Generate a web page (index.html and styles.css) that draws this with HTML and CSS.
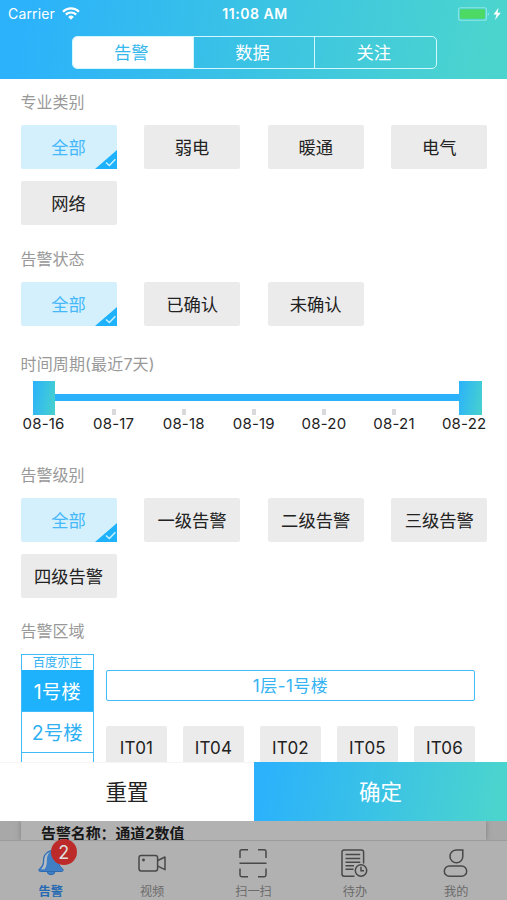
FILE: index.html
```html
<!DOCTYPE html>
<html lang="zh-CN">
<head>
<meta charset="utf-8">
<title>告警</title>
<link rel="stylesheet" href="styles.css">
</head>
<body>
<div class="app">
  <header class="header">
    <div class="status">
      <div class="carrier"><span>Carrier</span>
        <svg width="18" height="13" viewBox="0 0 18 13" fill="none" stroke="#fff" stroke-width="2.2"><path d="M1 4.7a11.5 11.5 0 0 1 16 0M3.8 7.6a7.5 7.5 0 0 1 10.4 0"/><path d="M6.2 9.9a4 4 0 0 1 5.6 0L9 12.7z" fill="#fff" stroke="none"/></svg>
      </div>
      <div class="clock">11:08 AM</div>
      <div class="power">
        <svg width="44" height="14" viewBox="0 0 44 14"><rect x=".6" y=".8" width="27.8" height="12.4" rx="2" fill="none" stroke="#8fe6e4" stroke-width="1.1"/><rect x="2" y="2.2" width="25" height="9.6" rx="1" fill="#4cd964"/><path d="M29.8 5q2.4 2 0 4z" fill="#8fe6e4"/><path d="M40.5.8 35.5 7.6h3L37 13l5.800-7.200h-3.300z" fill="#fff"/></svg>
      </div>
    </div>
    <nav class="segments"><span class="segment selected">告警</span><span class="segment">数据</span><span class="segment">关注</span></nav>
  </header>

  <main class="filters">
    <section class="group tall">
      <h2>专业类别</h2>
      <div class="chips">
        <div class="chip on">全部<svg class="tick" width="22" height="19" viewBox="0 0 22 19"><path d="M22 0v19H0z" fill="#1eb2fc"/><path d="m11 12.5 3.400 3 6-6.200" fill="none" stroke="#c9f1ff" stroke-width="1.5"/></svg></div>
        <div class="chip">弱电</div><div class="chip">暖通</div><div class="chip">电气</div><div class="chip">网络</div>
      </div>
    </section>
    <section class="group state">
      <h2>告警状态</h2>
      <div class="chips">
        <div class="chip on">全部<svg class="tick" width="22" height="19" viewBox="0 0 22 19"><path d="M22 0v19H0z" fill="#1eb2fc"/><path d="m11 12.5 3.400 3 6-6.200" fill="none" stroke="#c9f1ff" stroke-width="1.5"/></svg></div>
        <div class="chip">已确认</div><div class="chip">未确认</div>
      </div>
    </section>
    <section class="group period">
      <h2>时间周期(最近7天)</h2>
      <div class="slider"><i class="handle"></i><i class="track"></i><i class="handle"></i></div>
      <div class="days">
        <span>08-16</span><span class="mark">08-17</span><span class="mark">08-18</span><span class="mark">08-19</span><span class="mark">08-20</span><span class="mark">08-21</span><span>08-22</span>
      </div>
    </section>
    <section class="group level">
      <h2>告警级别</h2>
      <div class="chips">
        <div class="chip on">全部<svg class="tick" width="22" height="19" viewBox="0 0 22 19"><path d="M22 0v19H0z" fill="#1eb2fc"/><path d="m11 12.5 3.400 3 6-6.200" fill="none" stroke="#c9f1ff" stroke-width="1.5"/></svg></div>
        <div class="chip">一级告警</div><div class="chip">二级告警</div><div class="chip">三级告警</div><div class="chip">四级告警</div>
      </div>
    </section>
    <section class="group area">
      <h2>告警区域</h2>
      <div class="region">
        <div class="buildings"><div class="site">百度亦庄</div><div class="building current">1号楼</div><div class="building">2号楼</div><div class="building"></div></div>
        <div class="floors">
          <div class="floor">1层-1号楼</div>
          <div class="rooms"><span>IT01</span><span>IT04</span><span>IT02</span><span>IT05</span><span>IT06</span></div>
        </div>
      </div>
    </section>
  </main>

  <div class="actions"><div class="reset">重置</div><div class="confirm">确定</div></div>
  <div class="behind"><div class="card">告警名称：通道2数值</div></div>

  <footer class="tabs">
    <div class="tab active">
      <div class="icon">
        <svg width="30" height="32" viewBox="0 0 30 32"><path d="M15.500 3.500c-5 1-8 4.500-8 9.500 0 4-1 6.700-4 8.700-1.200 1.300-.6 2.800.8 2.800h21.400c1.400 0 2-1.500.8-2.800-3-2-4-4.700-4-8.700 0-5-2-9-7-9.500z" fill="#417fc4" stroke="#2c6ab2"/><path d="M14 5c-4 1.500-5.700 4.500-5.700 8.500 0 4-1 6.500-3.300 8.800h3.500c2-2.500 2.300-5.500 2.300-8.800 0-3.500 1-6.500 3.200-8.500z" fill="#b7bcc3"/><path d="M11 24.500a4.200 4.200 0 0 0 8.200 0z" fill="#417fc4" stroke="#2c6ab2"/></svg>
        <b class="badge">2</b>
      </div><span>告警</span>
    </div>
    <div class="tab">
      <div class="icon"><svg width="30" height="32" viewBox="0 0 30 32" fill="none" stroke="#484848" stroke-width="1.5" stroke-linejoin="round"><rect x="2" y="8.500" width="18.600" height="15.400" rx="2.200"/><path d="m20.800 13.500 7.200-3.500v12.700l-7.200-3.500"/><circle cx="6.500" cy="13" r=".7" fill="#484848"/></svg></div><span>视频</span>
    </div>
    <div class="tab">
      <div class="icon"><svg width="30" height="32" viewBox="0 0 30 32" fill="none" stroke="#484848" stroke-width="1.5"><path d="M2 11V4.500Q2 2.800 3.700 2.800H10M20 2.800h6.300Q28 2.800 28 4.500V11M2 21.500V28q0 1.700 1.700 1.700H10M20 29.700h6.300Q28 29.700 28 28v-6.500M1.500 16.200h27"/></svg></div><span>扫一扫</span>
    </div>
    <div class="tab">
      <div class="icon"><svg width="30" height="32" viewBox="0 0 30 32" fill="none" stroke="#484848" stroke-width="1.5"><path d="M14.500 29.200H4.200Q2 29.200 2 27V5.200Q2 3 4.200 3h17.200q2.200 0 2.200 2.200v11.300M5.500 7.500h14.700M5.500 11.500h14.700M5.500 15.200h14.700M5.500 18.700h8.500M5.500 22.300h8"/><circle cx="21" cy="23.500" r="5.700"/><path d="M21 19.800v4h3"/></svg></div><span>待办</span>
    </div>
    <div class="tab">
      <div class="icon"><svg width="30" height="32" viewBox="0 0 30 32" fill="none" stroke="#484848" stroke-width="1.5"><path d="M15 3h6.800v6.500A6.400 6.400 0 1 1 15 3z"/><rect x="3.300" y="19" width="22.400" height="10.300" rx="5.150"/></svg></div><span>我的</span>
    </div>
  </footer>
</div>
</body>
</html>
```
FILE: styles.css
```css
* { box-sizing: border-box; }
body { margin: 0; background: #b1b1b1; font-family: Inter, "Noto Sans CJK SC", sans-serif; color: #222; }
.app { width: 507px; height: 900px; display: flex; flex-direction: column; overflow: hidden; }

.header { height: 79px; flex: none; background: linear-gradient(100deg, #2bb2fb 5%, #4bd4ce 95%); color: #fff; }
.status { height: 36px; padding: 0 5px 9px 8px; display: grid; grid-template-columns: 1fr auto 1fr; align-items: center; font-size: 14px; }
.carrier { display: flex; align-items: center; gap: 7px; letter-spacing: .15px; }
.clock { font-weight: 600; font-size: 14px; letter-spacing: .55px; }
.power { display: flex; justify-content: flex-end; }
.segments { width: 365px; height: 33px; margin-left: 71.5px; display: flex; border: 1.5px solid #d2f7ff; border-radius: 5px; overflow: hidden; }
.segment { flex: 1; display: flex; align-items: center; justify-content: center; font-size: 17.3px; padding: 0 3px 2px 0; }
.segment + .segment { border-left: 1.5px solid #d2f7ff; }
.segment.selected { background: #fff; color: #36b8ed; }

.filters { height: 683px; flex: none; background: #fff; padding: 13px 0 0 20.5px; overflow: hidden; }
.group h2 { margin: 0 0 13px; height: 20px; line-height: 20px; font-size: 16px; font-weight: 400; color: #999; }
.tall { height: 157px; }
.state { height: 105px; }
.period { height: 111px; }
.level { height: 156px; }
.chips { display: grid; grid-template-columns: repeat(4, 96px); gap: 12px 27.6px; }
.chip { height: 44px; padding-bottom: 1px; display: flex; align-items: center; justify-content: center; background: #ebebeb; border-radius: 2px; font-size: 17.3px; position: relative; white-space: nowrap; }
.chip.on { background: #d4f0fd; color: #46b8fa; }
.tick { position: absolute; right: 0; bottom: 0; }

.group.period h2 { margin-bottom: 6.5px; letter-spacing: .15px; }
.slider { width: 449px; height: 34px; margin-left: 12px; display: flex; align-items: center; }
.handle { width: 22.5px; height: 34px; flex: none; background: linear-gradient(100deg, #2bb2fb, #47d2cd); }
.track { flex: 1; height: 7.5px; background: #2bb2fa; }
.days { display: grid; grid-template-columns: repeat(7, 70.1px); margin-left: -12px; height: 19px; line-height: 18px; text-align: center; font-size: 15px; letter-spacing: .2px; }
.days span { position: relative; }
.mark::before { content: ""; position: absolute; left: 33px; top: -6px; width: 4px; height: 6px; background: #d9d9dc; }

.region { display: flex; gap: 12px; margin-top: -1px; }
.group.area h2 { margin-bottom: 14px; }
.buildings { width: 73.5px; flex: none; border: 1.5px solid #42bcf8; height: 150px; text-align: center; color: #2fb0f2; }
.site { height: 15px; line-height: 16px; font-size: 12.3px; }
.building { height: 41px; padding-bottom: 2px; display: flex; align-items: center; justify-content: center; font-size: 19.5px; border-bottom: 1.5px solid #42bcf8; }
.current { height: 42px; padding-bottom: 1px; background: #1eb2fc; color: #fff; }
.floors { width: 369px; padding-top: 16px; }
.floor { height: 31px; padding-bottom: 2px; border: 1.5px solid #42bcf8; border-radius: 2px; display: flex; align-items: center; justify-content: center; color: #35b3f2; font-size: 17px; letter-spacing: .45px; }
.rooms { margin-top: 25px; display: grid; grid-template-columns: repeat(5, 61px); gap: 16px; }
.rooms span { height: 44px; background: #ebebeb; border-radius: 2px; display: flex; align-items: center; justify-content: center; font-size: 17px; letter-spacing: .2px; }

.actions { height: 59px; flex: none; display: grid; grid-template-columns: 254px 253px; font-size: 21.5px; }
.actions div { padding-bottom: 3px; display: flex; align-items: center; justify-content: center; }
.reset { background: #fff; border-top: 1px solid #f5f5f5; }
.confirm { color: #fff; background: linear-gradient(100deg, #2bb2fb 5%, #4bd4ce 95%); }
.behind { height: 19px; flex: none; background: #a8a8a8; padding: 0 21px; overflow: hidden; }
.card { height: 19px; background: #b2b2b2; box-shadow: 0 0 5px #7d7d7d; padding-left: 20px; line-height: 26px; font-size: 14.9px; font-weight: 700; white-space: nowrap; color: #171717; }
.tabs { height: 60px; flex: none; background: #b1b1b1; border-top: 1px solid #9b9b9b; display: grid; grid-template-columns: repeat(5, 1fr); color: #6b6b6b; }
.tab { padding-top: 6px; display: flex; flex-direction: column; align-items: center; font-size: 12.2px; }
.tab > span { line-height: 16px; margin-top: 5px; }
.icon { position: relative; height: 32px; }
.active { color: #2469b2; font-weight: 700; }
.badge { position: absolute; left: 15px; top: -8px; width: 26px; height: 26px; border-radius: 50%; background: #bd2a2a; color: #dedede; display: flex; align-items: center; justify-content: center; font-size: 18px; font-weight: 400; }
```
